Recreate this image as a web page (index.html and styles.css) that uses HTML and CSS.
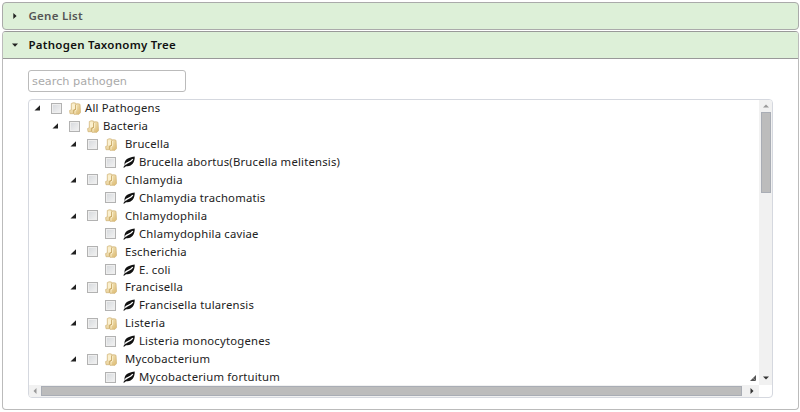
FILE: index.html
```
<!DOCTYPE html>
<html lang="en">
<head>
<meta charset="utf-8">
<title>Pathogen Taxonomy Tree</title>
<link rel="stylesheet" href="styles.css">
</head>
<body>
<svg class="defs" width="0" height="0">
  <defs>
    <linearGradient id="gold" x1="0" y1="0" x2="1" y2="1"><stop offset="0" stop-color="#fbf3d8"/><stop offset="1" stop-color="#dcba70"/></linearGradient>
    <symbol id="arrow" viewBox="0 0 6 6"><path d="M6 .3V5.5H.5z" fill="#222"/></symbol>
    <symbol id="folder" viewBox="0 0 12 13"><path d="M2.3 1.5Q4 .3 6.5 1L7 2Q9 1.2 11 2.3L11.5 10.5 10 12.3H5L4.5 11.7H1L.6 8.5 2.3 7.8z" fill="url(#gold)" stroke="#d0b273" stroke-width=".7"/><path d="M3 2.3H6V7L3 7.8z" fill="#fbf0cf"/><path d="M6.7 2.5V7.5L4.8 8V11.5" fill="none" stroke="#bd9850" stroke-width=".8"/><path d="M7.6 3V8L6 8.8V11.7" fill="none" stroke="#fff6d8" stroke-width=".8"/></symbol>
    <symbol id="leaf" viewBox="0 0 12 12"><path d="M.3 11.2 1.8 9.3C.5 5 4 1.5 11.7 .6 12 6.5 8.5 11.2 3 10.2L1 11.7z" fill="#111"/><path d="M2.2 8.7C4.2 5.7 6.8 7.2 9.8 3.2" fill="none" stroke="#fff" stroke-width="1.3"/></symbol>
  </defs>
</svg>
<main class="accordion">
  <h3 class="head closed"><svg class="mark" viewBox="0 0 6 6"><path d="M1.3 0 4.6 3 1.3 6z"/></svg>Gene List</h3>
  <section class="panel">
    <h3 class="head open"><svg class="mark" viewBox="0 0 6 6"><path d="M0 1.5H6L3 4.7z"/></svg>Pathogen Taxonomy Tree</h3>
    <div class="body">
      <input class="search" type="text" placeholder="search pathogen">
      <div class="tree">
        <div class="view">
          <ul class="rows">
            <li class="row root"><svg class="arrow"><use href="#arrow"/></svg><i class="box"></i><svg class="folder"><use href="#folder"/></svg><span>All Pathogens</span></li>
            <li class="row kingdom"><svg class="arrow"><use href="#arrow"/></svg><i class="box"></i><svg class="folder"><use href="#folder"/></svg><span>Bacteria</span></li>
            <li class="row genus"><svg class="arrow"><use href="#arrow"/></svg><i class="box"></i><svg class="folder"><use href="#folder"/></svg><span>Brucella</span></li>
            <li class="row species"><i class="box"></i><svg class="leaf"><use href="#leaf"/></svg><span>Brucella abortus(Brucella melitensis)</span></li>
            <li class="row genus"><svg class="arrow"><use href="#arrow"/></svg><i class="box"></i><svg class="folder"><use href="#folder"/></svg><span>Chlamydia</span></li>
            <li class="row species"><i class="box"></i><svg class="leaf"><use href="#leaf"/></svg><span>Chlamydia trachomatis</span></li>
            <li class="row genus"><svg class="arrow"><use href="#arrow"/></svg><i class="box"></i><svg class="folder"><use href="#folder"/></svg><span>Chlamydophila</span></li>
            <li class="row species"><i class="box"></i><svg class="leaf"><use href="#leaf"/></svg><span>Chlamydophila caviae</span></li>
            <li class="row genus"><svg class="arrow"><use href="#arrow"/></svg><i class="box"></i><svg class="folder"><use href="#folder"/></svg><span>Escherichia</span></li>
            <li class="row species"><i class="box"></i><svg class="leaf"><use href="#leaf"/></svg><span>E. coli</span></li>
            <li class="row genus"><svg class="arrow"><use href="#arrow"/></svg><i class="box"></i><svg class="folder"><use href="#folder"/></svg><span>Francisella</span></li>
            <li class="row species"><i class="box"></i><svg class="leaf"><use href="#leaf"/></svg><span>Francisella tularensis</span></li>
            <li class="row genus"><svg class="arrow"><use href="#arrow"/></svg><i class="box"></i><svg class="folder"><use href="#folder"/></svg><span>Listeria</span></li>
            <li class="row species"><i class="box"></i><svg class="leaf"><use href="#leaf"/></svg><span>Listeria monocytogenes</span></li>
            <li class="row genus"><svg class="arrow"><use href="#arrow"/></svg><i class="box"></i><svg class="folder"><use href="#folder"/></svg><span>Mycobacterium</span></li>
            <li class="row species"><i class="box"></i><svg class="leaf"><use href="#leaf"/></svg><span>Mycobacterium fortuitum</span></li>
          </ul>
          <svg class="grip" viewBox="0 0 6 6"><path d="M6 0V6H0z" fill="#555"/><path d="M3 3 6 6" stroke="#aaa" stroke-width=".6"/></svg>
        </div>
        <div class="vbar"><svg class="tick" viewBox="0 0 6 6"><path d="M0 4.5H6L3 1.5z" fill="#999"/></svg><b class="vthumb"></b><svg class="tick end" viewBox="0 0 6 6"><path d="M0 1.5H6L3 4.5z" fill="#333"/></svg></div>
        <div class="hbar"><svg class="tick" viewBox="0 0 6 6"><path d="M4.5 0V6L1.5 3z" fill="#999"/></svg><b class="hthumb"></b><svg class="tick end" viewBox="0 0 6 6"><path d="M1.5 0V6L4.5 3z" fill="#333"/></svg></div>
      </div>
    </div>
  </section>
</main>
</body>
</html>
```
FILE: styles.css
```
* { box-sizing: border-box; }
body { margin: 0; height: 412px; overflow: hidden; background: #fff; color: #222; font-family: "Noto Sans", "Open Sans", sans-serif; }
.defs { position: absolute; }
svg { flex: none; }
.accordion { padding: 2px 1px 0 2px; }
.head { margin: 0; display: flex; align-items: center; height: 28px; padding-left: 10px; background: #ddf0d8; font-size: 11.5px; line-height: 16px; font-weight: 600; letter-spacing: .26px; }
.closed { color: #555; border: 1px solid #aaa; border-radius: 4px; }
.open { height: 27px; padding-left: 9px; color: #111; border-bottom: 1px solid #999; border-radius: 3px 3px 0 0; }
.mark { width: 6px; height: 6px; margin-right: 10.5px; margin-left: -1px; fill: #222; }
.open .mark { margin-left: 0; }
.panel { margin-top: 1px; height: 379px; border: 1px solid #bbb; border-top-color: #999; border-radius: 4px; }
.body { padding: 11px 25px 0; }
.search { display: block; width: 158px; height: 22px; padding: 0 3px; border: 1px solid #bbb; border-radius: 3px; outline: 0; font: 11.3px "DejaVu Sans", sans-serif; background: #fff; }
.search::placeholder { color: #aaa; opacity: 1; }
.tree { margin-top: 7px; width: 745px; height: 299px; border: 1px solid #d5d8df; border-radius: 4px; overflow: hidden; display: grid; grid-template: 285px 12px / 730px 13px; }
.view { position: relative; overflow: hidden; }
.rows { list-style: none; margin: -.7px 0 0; padding: 0; }
.row { display: flex; align-items: center; height: 17.93px; font-size: 11.3px; line-height: 17px; letter-spacing: .2px; white-space: nowrap; }
.row span { margin-top: -1px; }
.root { padding-left: 5px; }
.kingdom { padding-left: 23px; }
.genus { padding-left: 41px; }
.species { padding-left: 76px; }
.arrow { width: 6px; height: 6px; margin-right: 11px; }
.box { flex: none; width: 11px; height: 11px; border: 1px solid #b2b2b2; background: linear-gradient(135deg, #d5d8dc, #f3f3f3); box-shadow: inset 0 0 0 1px #eee; }
.folder { width: 12px; height: 13px; margin: 0 4px 0 7px; }
.genus .folder { margin-right: 8px; }
.leaf { width: 12px; height: 12px; margin: 0 4px 0 7px; }
.grip { position: absolute; right: 3px; bottom: 4px; width: 6px; height: 6px; }
.vbar, .hbar { display: flex; align-items: center; background: #f1f1f1; }
.vbar { flex-direction: column; }
.tick { width: 6px; height: 6px; flex: none; }
.vbar .tick { margin: 3px 0; }
.hbar .tick { margin: 0 3px; }
.vthumb { width: 10px; height: 81px; background: #bcbcbc; border: 1px solid #a9adb5; }
.hthumb { width: 701px; height: 10px; background: #bcbcbc; border: 1px solid #a9adb5; }
.vbar .end { margin-top: auto; margin-bottom: 4px; }
.hbar .end { margin-left: auto; margin-right: 4px; }
```
